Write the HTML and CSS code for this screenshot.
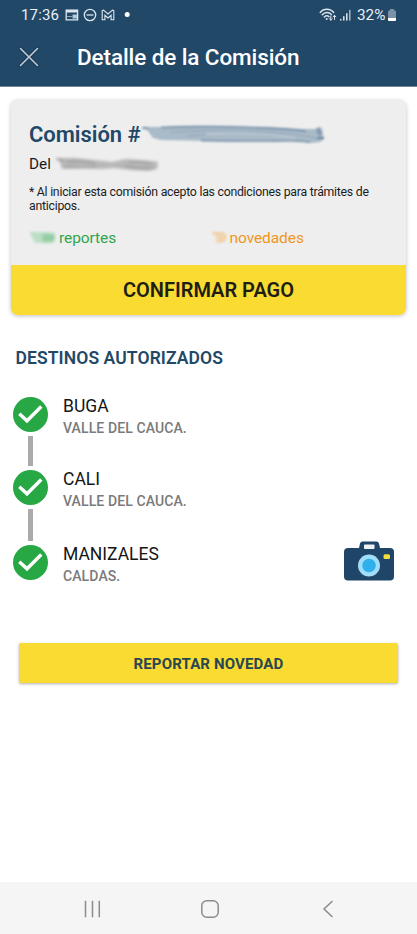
FILE: index.html
```html
<!DOCTYPE html>
<html lang="es">
<head>
<meta charset="utf-8">
<meta name="viewport" content="width=device-width, initial-scale=1">
<title>Detalle de la Comisión</title>
<link rel="stylesheet" href="styles.css">
</head>
<body>
<div class="screen">
  <header class="header">
    <div class="status">
      <span class="clock">17:36</span>
      <svg class="status-left" width="68" height="16" viewBox="0 0 68 16" fill="none" stroke="#dce5ed" stroke-width="1.3">
        <path d="M1.200 3.200h11.400v9.600H1.200z"/><path d="M1 4.200h12" stroke-width="2.600"/><path d="M2 9.500h5" stroke="#8fa5b7" stroke-width="1"/><path d="M7.500 7.500h4.500v4h-4.500z" fill="#b9c8d5" stroke="none"/>
        <circle cx="25" cy="8" r="5.700"/><path d="M21.500 8h7"/>
        <path d="M37.200 12.800V3.600l1.300-.4L43 7l4.500-3.800 1.300.4v9.200h-2.700V8.300L43 11l-3.100-2.700v4.500z" stroke-width="1.100"/>
        <circle cx="62.200" cy="7.500" r="2.500" fill="#fff" stroke="none"/>
      </svg>
      <svg class="status-right" width="34" height="16" viewBox="0 0 34 16" fill="none" stroke="#dce5ed" stroke-width="1.400" stroke-linecap="round">
        <path d="M1.200 5.500C4.500 1.200 11.500 1.200 14.700 5.500M3.200 7.800c2.600-3 7-3 9.300-.2M5.300 10c1.300-1.600 3.400-1.600 4.700-.3"/><circle cx="7.700" cy="12" r="1" fill="#dce5ed" stroke="none"/>
        <path d="M11.800 9v4m-1.300-1.300 1.300 1.600 1.300-1.600M15.500 12.500v-4m-1.300 1.300 1.300-1.600 1.300 1.600" stroke-width="1"/>
        <path d="M21.800 12.500v.5M24.800 9.700V13M27.800 6.700V13" stroke-width="1.500"/><path d="M30.800 3.500V13" stroke="#a7b8c7" stroke-width="1.500"/>
      </svg>
      <span class="percent">32%</span>
      <svg class="battery" width="8" height="13" viewBox="0 0 8 13"><path d="M2 0h4v1.500h1q1 0 1 1V9H0V2.500q0-1 1-1h1z" fill="#7b91a5"/><path d="M0 9h8v2q0 1-1 1H1q-1 0-1-1z" fill="#fff"/></svg>
    </div>
    <div class="appbar">
      <svg class="close" width="22" height="22" viewBox="0 0 22 22" fill="none" stroke-linecap="round"><path d="M2.500 2.500l17 17m0-17l-17 17" stroke="#193a57" stroke-width="3.600"/><path d="M2.500 2.500l17 17m0-17l-17 17" stroke="#c5ced5" stroke-width="1.600"/></svg>
      <h1 class="title">Detalle de la Comisión</h1>
    </div>
  </header>

  <section class="card">
    <div class="card-body">
      <div class="number-line">
        <h2 class="number">Comisión #</h2>
        <svg class="number-smudge" width="188" height="24" viewBox="0 0 188 24" fill="none">
          <defs><filter id="soft" x="-10%" y="-30%" width="120%" height="160%"><feGaussianBlur stdDeviation="0.9"/></filter><filter id="softer" x="-10%" y="-30%" width="120%" height="160%"><feGaussianBlur stdDeviation="1.5"/></filter></defs>
          <g filter="url(#soft)">
            <path d="M1 4L14 4 72 3.500 130 4 160 6 174 6 178 4 181 5 182 12 183 16 179 19 170 20 150 18 70 18 20 17 12 15 7 8z" fill="#a9bac8"/>
            <path d="M1 5h6M20 4.500Q60 2.500 110 4.500t55 4" stroke="#6686a1" stroke-width="1.300"/>
            <path d="M60 17.500Q110 18.500 135 18t34 1" stroke="#6787a2" stroke-width="1.400"/>
            <path d="M30 9Q80 6 125 9t50 7M46 13Q92 8 150 15" stroke="#8fa5b7" stroke-width="1"/>
            <path d="M65 11Q115 9 154 15" stroke="#bbc8d2" stroke-width="2"/>
            <path d="M176 6q3 2 3 6" stroke="#8299ad" stroke-width="4"/><path d="M176 15h7" stroke="#557793" stroke-width="1.800"/>
          </g>
        </svg>
      </div>
      <div class="date-line"><span class="date">Del</span>
        <svg width="110" height="18" viewBox="0 0 110 18" fill="none"><g filter="url(#softer)"><path d="M3 3h18l30 3 8 1 14-3 26 2 6 1-1 7-9 2-18-1-16-2-12 1-18-1-22 1-2-7z" fill="#b7b7b7"/><path d="M3 4q5 0 7 3M14 7q12-2 28 1M12 12q18 1 32 0M72 11q16 3 28 2M76 7q14-1 22 2" stroke="#9a9a9a" stroke-width="1.600"/></g></svg>
      </div>
      <p class="note">* Al iniciar esta comisión acepto las condiciones para trámites de<br>anticipos.</p>
      <div class="counts">
        <div class="count reports"><svg width="30" height="16" viewBox="0 0 30 16"><g filter="url(#softer)"><path d="M0 2h20l6 1v9l-5 1H6L3 7z" fill="#bcdec5"/><path d="M13 4h11l2 3-2 5H14z" fill="#94cda4"/></g></svg><span>reportes</span></div>
        <div class="count news"><svg width="20" height="16" viewBox="0 0 20 16"><g filter="url(#soft)"><path d="M0 2h13l3 3-1 6-5 2H5V7z" fill="#f2d8b8"/><path d="M2 3h11M7 7h8M7 11h7" stroke="#eec99b" stroke-width="1.500"/></g></svg><span>novedades</span></div>
      </div>
    </div>
    <button class="confirm"><span>CONFIRMAR PAGO</span></button>
  </section>

  <h2 class="section-title"><span>DESTINOS AUTORIZADOS</span></h2>
  <ul class="stops">
    <li class="stop">
      <div class="rail"><svg class="check" width="35" height="35" viewBox="0 0 35 35"><circle cx="17.500" cy="17.500" r="17.500" fill="#28a745"/><path d="M6.300 16.800l7.700 7L28.300 9.500" fill="none" stroke="#fff" stroke-width="3.400"/></svg><i class="line"></i></div>
      <div class="place"><span class="city">BUGA</span><span class="dept">VALLE DEL CAUCA.</span></div>
    </li>
    <li class="stop second">
      <div class="rail"><svg class="check" width="35" height="35" viewBox="0 0 35 35"><circle cx="17.500" cy="17.500" r="17.500" fill="#28a745"/><path d="M6.300 16.800l7.700 7L28.300 9.500" fill="none" stroke="#fff" stroke-width="3.400"/></svg><i class="line"></i></div>
      <div class="place"><span class="city">CALI</span><span class="dept">VALLE DEL CAUCA.</span></div>
    </li>
    <li class="stop">
      <div class="rail"><svg class="check" width="35" height="35" viewBox="0 0 35 35"><circle cx="17.500" cy="17.500" r="17.500" fill="#28a745"/><path d="M6.300 16.800l7.700 7L28.300 9.500" fill="none" stroke="#fff" stroke-width="3.400"/></svg></div>
      <div class="place"><span class="city">MANIZALES</span><span class="dept">CALDAS.</span></div>
      <svg class="camera" width="50" height="40" viewBox="0 0 50 40"><path d="M4 7h11l1-4.500Q16.600.5 18.600.5h13.800q2 0 2.600 2L36 7h10q4 0 4 4v24.500q0 4-4 4H4q-4 0-4-4V11q0-4 4-4z" fill="#1f4568"/><rect x="20" y="3.500" width="10.500" height="4.500" rx=".7" fill="#edf2f5"/><circle cx="25" cy="24.500" r="11" fill="#a1dcf9"/><circle cx="25" cy="24.500" r="6.800" fill="#30b0ea"/><rect x="39.500" y="13.300" width="6.500" height="4.700" rx="1.500" fill="#f6df3b"/></svg>
    </li>
  </ul>
  <button class="report"><span>REPORTAR NOVEDAD</span></button>

  <nav class="navbar">
    <svg width="18" height="18" viewBox="0 0 18 18" fill="none" stroke="#8c8c8c" stroke-width="1.500"><path d="M2.500 .8v16.400M9.500 .8v16.400M16.300 .8v16.400"/></svg>
    <svg width="18" height="18" viewBox="0 0 18 18" fill="none" stroke="#8c8c8c" stroke-width="1.500"><rect x=".8" y=".8" width="16.400" height="16.400" rx="5"/></svg>
    <svg width="18" height="18" viewBox="0 0 18 18" fill="none" stroke="#8c8c8c" stroke-width="1.500"><path d="M13.500 1L5 9l8.500 8"/></svg>
  </nav>
</div>
</body>
</html>
```
FILE: styles.css
```css
* { box-sizing: border-box; }
body { margin: 0; background: #fff; font-family: Roboto, "Liberation Sans", sans-serif; color: #1c1c1c; }
h1, h2, p, ul { margin: 0; padding: 0; }
button { border: 0; font: inherit; padding: 0; display: block; }
svg { display: block; flex: none; }
span { white-space: nowrap; }
.screen { width: 417px; height: 934px; display: flex; flex-direction: column; overflow: hidden; }
.header { height: 87px; flex: none; background: #224868; border-bottom: 1px solid #6f8597; }
.status { height: 30px; display: flex; align-items: center; padding-left: 21px; color: #e9eff4; font-size: 15px; line-height: 30px; }
.clock { width: 44px; letter-spacing: .15px; }
.status-right { margin-left: 186px; }
.percent { margin-left: 4px; width: 29px; font-size: 15.300px; }
.battery { margin-left: 2px; }
.appbar { height: 56px; display: flex; align-items: center; padding: 0 0 3px 18px; }
.title { margin-left: 37px; color: #fff; font-weight: 500; font-size: 22.500px; line-height: 30px; letter-spacing: -.1px; white-space: nowrap; }
.card { margin: 13px 11px 0 11px; width: 395px; height: 215px; flex: none; border-radius: 7px; background: #eee; overflow: hidden; box-shadow: 0 1px 4px rgba(0,0,0,.25); }
.card-body { height: 165px; padding: 22px 18px 0; }
.number-line { display: flex; height: 26px; align-items: center; }
.number { color: #224868; font-size: 22px; line-height: 26px; font-weight: 600; letter-spacing: -.05px; width: 112px; white-space: nowrap; }
.date-line { display: flex; height: 18px; margin-top: 7px; align-items: center; font-size: 15.300px; line-height: 18px; }
.date { width: 24px; }
.note { margin-top: 12px; font-size: 12.300px; line-height: 14px; letter-spacing: -.255px; white-space: nowrap; }
.counts { display: flex; margin-top: 15px; font-size: 15.500px; line-height: 20px; letter-spacing: -.08px; }
.count { display: flex; align-items: center; }
.reports { width: 182px; color: #31a54d; }
.news { color: #ef961f; }
.news svg { margin-right: -1.500px; }
.confirm { width: 100%; height: 50px; background: #f9db31; color: #201e13; font-size: 20px; line-height: 51px; font-weight: 600; text-align: center; }
.section-title { margin: 32px 0 0 15.500px; height: 22px; color: #224868; font-size: 17.500px; line-height: 22px; font-weight: 600; letter-spacing: .1px; }
.stops { list-style: none; margin: 28px 22px 0 12.500px; height: 183px; flex: none; }
.stop { display: flex; height: 73px; }
.second { height: 75px; }
.rail { width: 35px; display: flex; flex-direction: column; align-items: center; }
.line { width: 5px; flex: 1; margin: 4px 0; background: #aaa; }
.place { display: flex; flex-direction: column; align-items: flex-start; margin-left: 15.500px; }
.city { height: 20px; font-size: 17.500px; line-height: 18px; color: #151515; }
.dept { height: 18px; margin-top: 2px; font-size: 14px; line-height: 18px; color: #7a7a7a; font-weight: 500; letter-spacing: .1px; }
.camera { margin: -4px 1px 0 auto; }
.report { margin: 63px 0 0 19px; width: 379px; height: 40px; flex: none; border-radius: 2px; background: #f9db31; color: #294653; font-size: 15px; line-height: 42px; font-weight: 700; letter-spacing: .15px; text-align: center; box-shadow: 0 1px 3px rgba(0,0,0,.32); }
.navbar { margin-top: auto; height: 52px; flex: none; background: #f5f5f5; display: flex; align-items: center; justify-content: space-between; padding: 2px 80px 0 83px; }
```
